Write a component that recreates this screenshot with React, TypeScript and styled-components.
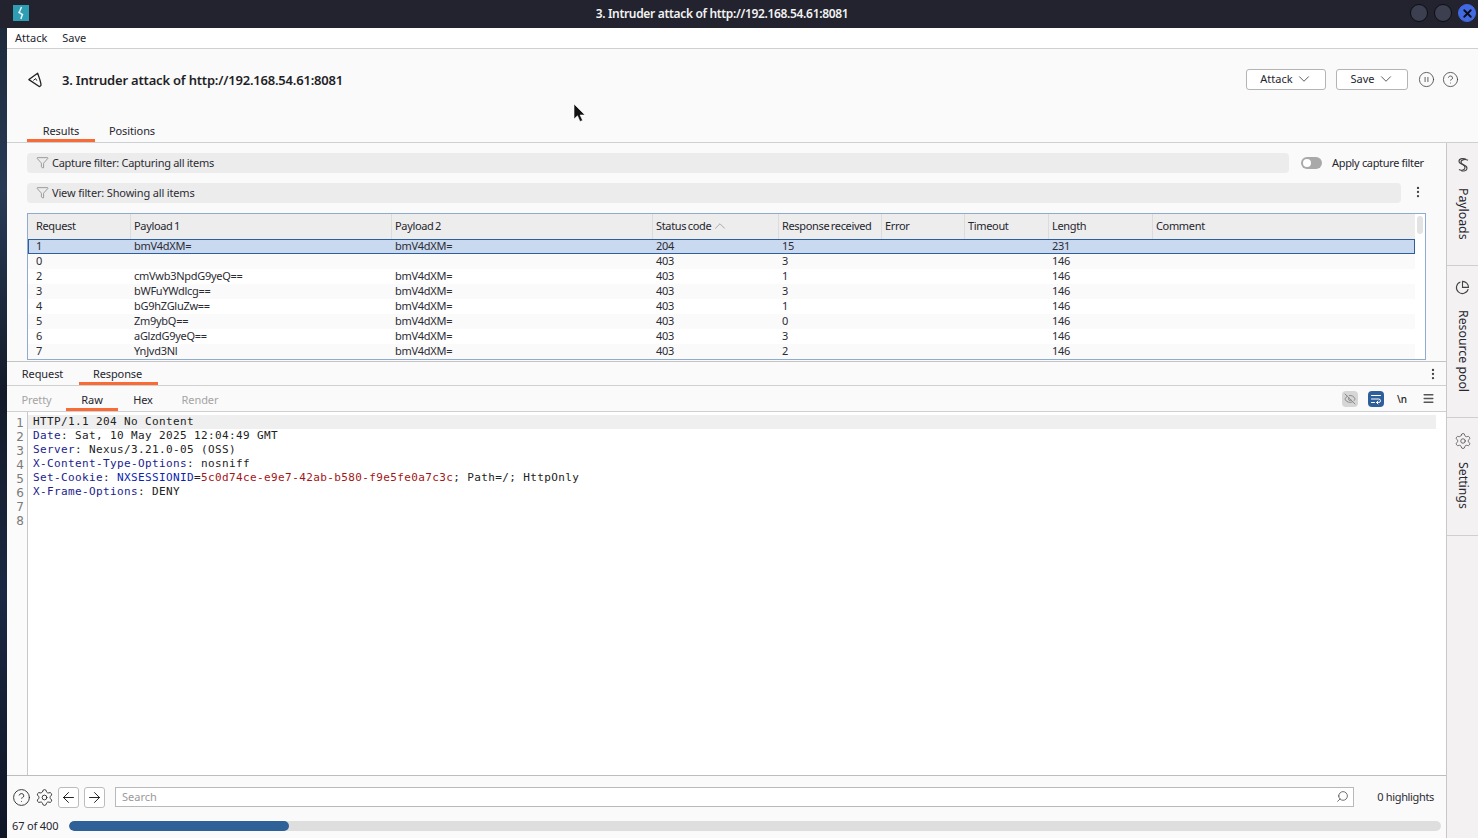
import React from "react";
import styled, { createGlobalStyle } from "styled-components";
import { ChevronDown, ChevronUp, ArrowLeft, ArrowRight, Search, HelpCircle, Settings, CirclePause, EllipsisVertical, Funnel, EyeOff, WrapText, Menu, X } from "lucide-react";

const Global = createGlobalStyle`
  html, body { margin: 0; padding: 0; height: 100%; overflow: hidden; background: #1a2233; }
  * { box-sizing: border-box; }
  body { font-family: "Noto Sans", sans-serif; font-size: 11.5px; color: #26262e; }
`;

const Page = styled.div`
  width: 1478px; height: 838px; display: flex; flex-direction: column; position: relative; overflow: hidden;
`;
const TitleBar = styled.header`
  height: 28px; flex: none; background: #22232e; display: flex; align-items: center; padding: 0 2px 2px 13px;
`;
const TitleText = styled.div`
  flex: 1; text-align: center; color: #f2f2f2; font-size: 12px; font-weight: 600; padding-left: 5px; letter-spacing: -0.33px; line-height: 15px;
`;
const WinControls = styled.div`
  display: flex; gap: 6px; align-items: center;
`;
const WinButton = styled.div<{ $close?: boolean }>`
  width: 18px; height: 18px; border-radius: 50%; border: 1px solid ${p => p.$close ? "#4169e1" : "#0d0e14"};
  background: ${p => p.$close ? "#4169e1" : "#3b3f50"}; display: flex; align-items: center; justify-content: center; color: #0d0d14;
`;
const Body = styled.div`
  flex: 1; min-height: 0; display: flex;
`;
const Strip = styled.div`
  width: 7px; flex: none;
  background: linear-gradient(180deg, #1d2a3c 0%, #283a55 20%, #131b2a 45%, #1a2842 70%, #0f1626 100%);
`;
const Window = styled.div`
  flex: 1; min-width: 0; display: flex; flex-direction: column; background: #fafafa;
`;
const MenuBar = styled.nav`
  height: 21px; flex: none; background: #fff; border-bottom: 1px solid #cfd1d1; display: flex; gap: 15px; padding: 0 0 0 8px; align-items: center; font-size: 11px; line-height: 20px;
`;
const Header = styled.div`
  height: 94px; flex: none; border-bottom: 1px solid #cdd0d0; display: flex; flex-direction: column; background: #fafafa;
`;
const HeaderTop = styled.div`
  height: 62px; display: flex; align-items: center; padding: 0 19px 0 21px;
`;
const AttackTitle = styled.h1`
  margin: 0 0 0 20px; font-size: 13px; font-weight: 600; color: #1f1f28; flex: 1; letter-spacing: -0.2px;
`;
const OutlineButton = styled.button<{ $w: number }>`
  width: ${p => p.$w}px; height: 21px; margin: 0 10px 2px 0; background: #fff; border: 1px solid #b4b4b4; border-radius: 3px; display: flex; align-items: center; justify-content: center; gap: 2px; font: 400 11px/16px "Noto Sans", sans-serif; color: #26262e; padding: 0 0 1px 1px;
`;
const HeadIcons = styled.div`
  display: flex; gap: 7px; align-items: center; color: #3a3a3a; margin-bottom: 2px;
`;
const TabRow = styled.div`
  margin-top: auto; display: flex; padding-left: 20px; height: 24px;
`;
const Tab = styled.div<{ $active?: boolean; $w: number; $dim?: boolean; $lh?: number; $pr?: number }>`
  width: ${p => p.$w}px; text-align: center; font-size: 11px; line-height: ${p => p.$lh ?? 22}px; height: 100%; letter-spacing: -0.1px; padding-right: ${p => p.$pr ?? 0}px;
  border-bottom: 3px solid ${p => p.$active ? "#f96a35" : "transparent"};
  color: ${p => p.$dim ? "#a4a4a4" : "#26262e"};
`;
const Main = styled.div`
  flex: 1; min-height: 0; display: flex;
`;
const Content = styled.div`
  flex: 1; min-width: 0; display: flex; flex-direction: column;
`;
const Side = styled.aside`
  width: 32px; flex: none; background: #f3f1f1; border-left: 1px solid #c8c8c8; display: flex; flex-direction: column;
`;
const SideItem = styled.div<{ $h: number; $gap: number }>`
  height: ${p => p.$h}px; border-bottom: 1px solid #cfcfcf; display: flex; flex-direction: column; align-items: center; padding-top: 14px; gap: ${p => p.$gap}px; color: #444;
`;
const SideLabel = styled.span`
  writing-mode: vertical-rl; font-size: 12.3px; color: #26262e; line-height: 30px; width: 30px; text-align: left;
`;
const FilterArea = styled.div`
  padding: 10px 20px 0 20px; height: 70px; flex: none; display: flex; flex-direction: column; gap: 10px;
`;
const FilterRow = styled.div`
  display: flex; align-items: center; height: 20px;
`;
const FilterBar = styled.div<{ $ls: number }>`
  flex: 1; height: 20px; background: #ececec; border-radius: 4px; display: flex; align-items: center; padding: 0 0 2px 9px; gap: 3px; font-size: 11px; color: #2c2c34; letter-spacing: ${p => p.$ls}px;
`;
const Toggle = styled.div`
  width: 21px; height: 12px; border-radius: 6px; background: #a9a9a9; margin: 0 10px 0 12px; padding: 2px 0 0 2px;
  &::after { content: ""; display: block; width: 8px; height: 8px; border-radius: 50%; background: #fff; }
`;
const ToggleLabel = styled.span`
  font-size: 11px; width: 94px; letter-spacing: -0.33px; padding-bottom: 2px; white-space: nowrap;
`;
const KebabWrap = styled.div`
  width: 25px; display: flex; justify-content: flex-end; padding: 0 1px 2px 0; color: #444;
`;
const TableBox = styled.div`
  margin: 0 20px; height: 147px; flex: none; border: 1px solid #8fabd2; background: #fff; position: relative; overflow: hidden;
`;
const Scroll = styled.div`
  position: absolute; right: 2px; top: 2px; width: 6px; height: 18px; background: #e3e3e3; border-radius: 3px;
`;
const Rows = styled.div`
  width: 1387px;
`;
const cols = "103px 261px 261px 126px 103px 83px 84px 104px 1fr";
const HeadRow = styled.div`
  display: grid; grid-template-columns: ${cols}; height: 25px; background: #ededed; font-size: 11px; letter-spacing: -0.34px; word-spacing: -1px;
`;
const HeadCell = styled.div`
  display: flex; align-items: center; gap: 0; padding: 0 0 2px 8px; border-right: 1px solid #dcdcdc; &:not(:first-child){ padding-left: 3px; } &:last-child { border-right: 0; }
`;
const Row = styled.div<{ $sel?: boolean; $alt?: boolean }>`
  display: grid; grid-template-columns: ${cols}; height: 15px; line-height: 13px; font-size: 11px; letter-spacing: -0.28px;
  background: ${p => p.$sel ? "#c9d9ef" : p.$alt ? "#fafafa" : "#fff"};
  ${p => p.$sel ? "box-shadow: inset 0 0 0 1px #2f5f9a;" : ""}
`;
const Cell = styled.div<{ $first?: boolean }>`
  padding-left: ${p => p.$first ? 8 : 3}px; white-space: nowrap; overflow: hidden; color: #2c2c34;
`;
const Pane = styled.div`
  margin-top: 1px; border-top: 1px solid #c4c4c4; flex: 1; min-height: 0; display: flex; flex-direction: column;
`;
const PaneTabs = styled.div`
  height: 24px; flex: none; display: flex; border-bottom: 1px solid #d0d0d0; align-items: stretch;
`;
const PaneKebab = styled.div`
  margin-left: auto; width: 26px; display: flex; align-items: center; justify-content: center; color: #444;
`;
const SubTabs = styled.div`
  height: 26px; flex: none; display: flex; border-bottom: 1px solid #d0d0d0; align-items: stretch;
`;
const SubTools = styled.div`
  margin-left: auto; display: flex; align-items: center; padding-right: 10px; gap: 10px; color: #444;
`;
const ToolBtn = styled.div<{ $on?: boolean; $off?: boolean }>`
  width: 16px; height: 16px; border-radius: 4px; display: flex; align-items: center; justify-content: center; font: 500 10px "Noto Sans", sans-serif;
  background: ${p => p.$on ? "#2f5f9a" : p.$off ? "#d6d6d6" : "transparent"}; color: ${p => p.$on ? "#fff" : p.$off ? "#8c8c8c" : "#222"};
`;
const Editor = styled.div`
  flex: 1; min-height: 0; display: flex; background: #fff; border-bottom: 1px solid #bdbdbd;
`;
const Gutter = styled.div`
  width: 21px; flex: none; border-right: 1px solid #c8c8c8; padding: 4px 3px 0 0; text-align: right; font: 12px/14px "DejaVu Sans", sans-serif; color: #7a7a7a; background: #fbfbfb;
`;
const Code = styled.pre`
  margin: 0; flex: 1; padding: 3px 10px 0 0; font: 11px/13px "DejaVu Sans Mono", monospace; letter-spacing: 0.38px; color: #222;
`;
const CodeLine = styled.div<{ $hl?: boolean }>`
  height: 14px; padding-left: 5px; background: ${p => p.$hl ? "#efefef" : "transparent"};
`;
const HKey = styled.span` color: #1c1c8c; `;
const CName = styled.span` color: #0a1fb5; `;
const CVal = styled.span` color: #a31515; `;
const Footer = styled.div`
  height: 42px; flex: none; display: flex; align-items: center; padding: 0 12px 0 5px; background: #fafafa;
`;
const RoundIcon = styled.div`
  width: 19px; display: flex; justify-content: center; color: #333; margin-right: 4px;
`;
const NavBtn = styled.div`
  width: 21px; height: 21px; border: 1px solid #bcbcbc; border-radius: 3px; background: #fff; display: flex; align-items: center; justify-content: center; margin-right: 5px; color: #111;
`;
const SearchBox = styled.div`
  margin-left: 5px; width: 1239px; height: 20px; border: 1px solid #b9b9b9; background: #fff; display: flex; align-items: center; justify-content: space-between; padding: 0 4px 2px 6px; font-size: 11px; color: #9a9a9a;
`;
const Highlights = styled.span`
  margin-left: auto; font-size: 11px; color: #2c2c34; letter-spacing: -0.35px; padding-bottom: 2px;
`;
const Progress = styled.div`
  height: 20px; flex: none; display: flex; align-items: flex-start; padding: 0 5px; font-size: 11px; line-height: 16px;
`;
const ProgressLabel = styled.span`
  width: 57px; letter-spacing: -0.15px;
`;
const Track = styled.div`
  width: 1372px; height: 10px; margin-top: 3px; border-radius: 5px; background: #dedede; overflow: hidden;
`;
const Bar = styled.div`
  height: 100%; border-radius: 5px; background: #2f6199;
`;
const Cursor = styled.svg`
  position: absolute; left: 573px; top: 103px;
`;

const LogoIcon = () => (
  <svg width="16" height="16" viewBox="0 0 16 16">
    <rect width="16" height="16" fill="#2f9db4" />
    <path d="M8.5 2 7 5.5 6 7.5l3.5 2-1 2.5 -.5 2" fill="none" stroke="#e6f6f8" strokeWidth="1.5" />
  </svg>
);
const IntruderIcon = () => (
  <svg width="14" height="16" viewBox="0 0 14 16" fill="none" stroke="#222" strokeWidth="1.3" strokeLinejoin="round">
    <path d="M.9 7.6 9.6 1.2C10.6 4 12.4 8.5 13 12.5c.1 1-.7 2.2-1.8 2Z" />
    <path d="M5.4 8.4 7.6 6.6 8.8 8.6" strokeWidth="1" />
  </svg>
);
const SlashS = () => (
  <svg width="14" height="16" viewBox="0 0 14 16" fill="none" stroke="#444" strokeWidth="1.1">
    <path d="M10 2.2C7.8 1 3 1.2 3 4.2c0 1.6 1.4 2.4 3 3s3 1.5 3 3.2c0 2.6-3.8 3.4-6 2.2" />
    <path d="M12 3.2C9.8 2 5 2.2 5 5c0 1.6 1.4 2.4 3 3s3 1.5 3 3.2c0 2.8-3.8 3.4-6 2.2" />
  </svg>
);
const PieIcon = () => (
  <svg width="15" height="15" viewBox="0 0 15 15" fill="none" stroke="#444" strokeWidth="1.1">
    <path d="M5.4 1.9a6 6 0 1 0 7.8 7.3" />
    <path d="M7.5 1.4a6 6 0 0 1 6 6h-6Z" />
  </svg>
);

const rows: [string, string, string, string, string, string][] = [
  ["1", "bmV4dXM=", "bmV4dXM=", "204", "15", "231"],
  ["0", "", "", "403", "3", "146"],
  ["2", "cmVwb3NpdG9yeQ==", "bmV4dXM=", "403", "1", "146"],
  ["3", "bWFuYWdlcg==", "bmV4dXM=", "403", "3", "146"],
  ["4", "bG9hZGluZw==", "bmV4dXM=", "403", "1", "146"],
  ["5", "Zm9ybQ==", "bmV4dXM=", "403", "0", "146"],
  ["6", "aGlzdG9yeQ==", "bmV4dXM=", "403", "3", "146"],
  ["7", "YnJvd3Nl", "bmV4dXM=", "403", "2", "146"],
];
const headers = ["Request", "Payload 1", "Payload 2", "Status code", "Response received", "Error", "Timeout", "Length", "Comment"];

export default function App() {
  return (
    <Page>
      <Global />
      <TitleBar>
        <LogoIcon />
        <TitleText>3. Intruder attack of http://192.168.54.61:8081</TitleText>
        <WinControls>
          <WinButton /><WinButton />
          <WinButton $close><X size={13} strokeWidth={3.4} /></WinButton>
        </WinControls>
      </TitleBar>
      <Body>
        <Strip />
        <Window>
          <MenuBar><span>Attack</span><span>Save</span></MenuBar>
          <Header>
            <HeaderTop>
              <IntruderIcon />
              <AttackTitle>3. Intruder attack of http://192.168.54.61:8081</AttackTitle>
              <OutlineButton $w={80}>Attack <ChevronDown size={18} strokeWidth={1} /></OutlineButton>
              <OutlineButton $w={72}>Save <ChevronDown size={18} strokeWidth={1} /></OutlineButton>
              <HeadIcons>
                <CirclePause size={17} strokeWidth={1.1} />
                <HelpCircle size={17} strokeWidth={1.1} />
              </HeadIcons>
            </HeaderTop>
            <TabRow>
              <Tab $active $w={68} $lh={26}>Results</Tab>
              <Tab $w={74} $lh={26}>Positions</Tab>
            </TabRow>
          </Header>
          <Main>
            <Content>
              <FilterArea>
                <FilterRow>
                  <FilterBar $ls={-0.28}><Funnel size={13} strokeWidth={1.1} color="#666" />Capture filter: Capturing all items</FilterBar>
                  <Toggle />
                  <ToggleLabel>Apply capture filter</ToggleLabel>
                </FilterRow>
                <FilterRow>
                  <FilterBar $ls={-0.16}><Funnel size={13} strokeWidth={1.1} color="#666" />View filter: Showing all items</FilterBar>
                  <KebabWrap><EllipsisVertical size={14} /></KebabWrap>
                </FilterRow>
              </FilterArea>
              <TableBox>
                <Rows>
                  <HeadRow>
                    {headers.map(h => (
                      <HeadCell key={h}>{h}{h === "Status code" && <ChevronUp size={18} strokeWidth={0.9} color="#888" />}</HeadCell>
                    ))}
                  </HeadRow>
                  {rows.map((r, i) => (
                    <Row key={r[0]} $sel={i === 0} $alt={i % 2 === 1}>
                      <Cell $first>{r[0]}</Cell>
                      <Cell>{r[1]}</Cell>
                      <Cell>{r[2]}</Cell>
                      <Cell>{r[3]}</Cell>
                      <Cell>{r[4]}</Cell>
                      <Cell />
                      <Cell />
                      <Cell>{r[5]}</Cell>
                      <Cell />
                    </Row>
                  ))}
                </Rows>
                <Scroll />
              </TableBox>
              <Pane>
                <PaneTabs>
                  <Tab $w={72} $lh={24} $pr={1}>Request</Tab>
                  <Tab $active $w={79} $lh={24} $pr={2}>Response</Tab>
                  <PaneKebab><EllipsisVertical size={14} /></PaneKebab>
                </PaneTabs>
                <SubTabs>
                  <Tab $w={59} $dim $lh={27}>Pretty</Tab>
                  <Tab $active $w={52} $lh={27}>Raw</Tab>
                  <Tab $w={50} $lh={27}>Hex</Tab>
                  <Tab $w={64} $dim $lh={27}>Render</Tab>
                  <SubTools>
                    <ToolBtn $off><EyeOff size={12} /></ToolBtn>
                    <ToolBtn $on><WrapText size={12} /></ToolBtn>
                    <ToolBtn>\n</ToolBtn>
                    <ToolBtn><Menu size={13} strokeWidth={2.6} color="#555" /></ToolBtn>
                  </SubTools>
                </SubTabs>
                <Editor>
                  <Gutter>{[1, 2, 3, 4, 5, 6, 7, 8].map(n => <div key={n}>{n}</div>)}</Gutter>
                  <Code>
                    <CodeLine $hl>HTTP/1.1 204 No Content</CodeLine>
                    <CodeLine><HKey>Date</HKey>: Sat, 10 May 2025 12:04:49 GMT</CodeLine>
                    <CodeLine><HKey>Server</HKey>: Nexus/3.21.0-05 (OSS)</CodeLine>
                    <CodeLine><HKey>X-Content-Type-Options</HKey>: nosniff</CodeLine>
                    <CodeLine><HKey>Set-Cookie</HKey>: <CName>NXSESSIONID</CName>=<CVal>5c0d74ce-e9e7-42ab-b580-f9e5fe0a7c3c</CVal>; Path=/; HttpOnly</CodeLine>
                    <CodeLine><HKey>X-Frame-Options</HKey>: DENY</CodeLine>
                  </Code>
                </Editor>
                <Footer>
                  <RoundIcon><HelpCircle size={19} strokeWidth={1.2} /></RoundIcon>
                  <RoundIcon><Settings size={19} strokeWidth={1.2} /></RoundIcon>
                  <NavBtn><ArrowLeft size={17} strokeWidth={1.3} /></NavBtn>
                  <NavBtn><ArrowRight size={17} strokeWidth={1.3} /></NavBtn>
                  <SearchBox>Search<Search size={13} color="#444" strokeWidth={1.4} style={{ transform: "scaleX(-1)" }} /></SearchBox>
                  <Highlights>0 highlights</Highlights>
                </Footer>
                <Progress>
                  <ProgressLabel>67 of 400</ProgressLabel>
                  <Track><Bar style={{ width: `${(220 / 1372) * 100}%` }} /></Track>
                </Progress>
              </Pane>
            </Content>
            <Side>
              <SideItem $h={123} $gap={15}><SlashS /><SideLabel>Payloads</SideLabel></SideItem>
              <SideItem $h={152} $gap={15}><PieIcon /><SideLabel>Resource pool</SideLabel></SideItem>
              <SideItem $h={118} $gap={12}><Settings size={18} strokeWidth={1} /><SideLabel>Settings</SideLabel></SideItem>
            </Side>
          </Main>
        </Window>
      </Body>
      <Cursor width="14" height="20" viewBox="0 0 14 20"><path d="M1 1v15l3.5-3.2L7 18.5l2.6-1.1-2.5-5.4H12Z" fill="#111" stroke="#fff" strokeWidth=".6" /></Cursor>
    </Page>
  );
}
